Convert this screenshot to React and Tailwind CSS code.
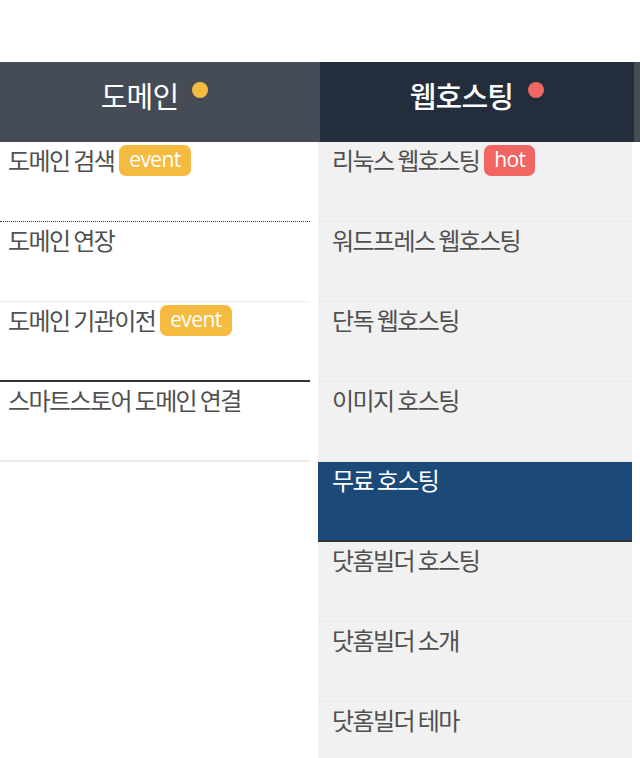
import React from 'react';

const FONT = { fontFamily: '"Noto Sans CJK KR", "Noto Sans", sans-serif' };

const domainMenu = [
    { label: '도메인 검색', badge: 'event', border: 'border-b border-dotted border-[#333]' },
    { label: '도메인 연장', border: 'border-b border-[#ececec]' },
    { label: '도메인 기관이전', badge: 'event', border: 'border-b-2 border-[#333]' },
    { label: '스마트스토어 도메인 연결', border: 'border-b-2 border-[#ececec]' },
];

const hostingMenu = [
    { label: '리눅스 웹호스팅', badge: 'hot' },
    { label: '워드프레스 웹호스팅' },
    { label: '단독 웹호스팅' },
    { label: '이미지 호스팅' },
    { label: '무료 호스팅', active: true },
    { label: '닷홈빌더 호스팅' },
    { label: '닷홈빌더 소개' },
    { label: '닷홈빌더 테마' },
];

const Badge = ({ text }) => (
    <span
        className={`ml-[5px] inline-flex h-[31px] items-center rounded-[7px] px-[10px] text-[21px] tracking-[-0.6px] text-white ${text === 'hot' ? 'bg-[#ef6662]' : 'bg-[#f5bb41]'}`}
        style={{ fontFamily: '"Open Sans", "Noto Sans", sans-serif' }}
    >
        {text}
    </span>
);

export default function App() {
    return (
        <div className="h-[758px] w-[640px] overflow-hidden bg-white" style={FONT}>
            <div className="h-[62px]" />

            {/* tabs */}
            <div className="flex h-20">
                <div className="flex w-[320px] justify-center bg-[#464c55] pr-[11px] text-white">
                    <span className="mt-[13px] text-[29px] leading-[40px] tracking-[-0.8px]">도메인</span>
                    <span className="ml-[14px] mt-[20px] h-4 w-4 rounded-full bg-[#f5bb41]" />
                </div>
                <div className="flex w-[314px] justify-center bg-[#232d3b] text-white">
                    <span className="mt-[13px] text-[29px] font-medium leading-[40px] tracking-[-0.8px]">웹호스팅</span>
                    <span className="ml-[15px] mt-[20px] h-4 w-4 rounded-full bg-[#ef6662]" />
                </div>
                <div className="flex-1 bg-[#464c55]" />
            </div>

            <div className="flex">
                {/* domain list */}
                <ul className="w-[310px]">
                    {domainMenu.map((item) => (
                        <li key={item.label} className={`h-20 pl-2 pt-[2px] ${item.border}`}>
                            <div className="flex h-8 items-center text-[24px] tracking-[-1.6px] text-[#505050]">
                                {item.label}
                                {item.badge && <Badge text={item.badge} />}
                            </div>
                        </li>
                    ))}
                </ul>

                {/* hosting list */}
                <ul className="ml-2 h-[616px] w-[314px] bg-[#f1f1f1]">
                    {hostingMenu.map((item) => (
                        <li
                            key={item.label}
                            className={`h-20 pl-[14px] pt-[2px] ${item.active ? 'border-b-2 border-[#333] bg-[#1b4a78] text-white' : 'border-b border-[#e9e9e9] text-[#505050]'}`}
                        >
                            <div className="flex h-8 items-center text-[24px] tracking-[-1.6px]">
                                {item.label}
                                {item.badge && <Badge text={item.badge} />}
                            </div>
                        </li>
                    ))}
                </ul>
            </div>
        </div>
    );
}
